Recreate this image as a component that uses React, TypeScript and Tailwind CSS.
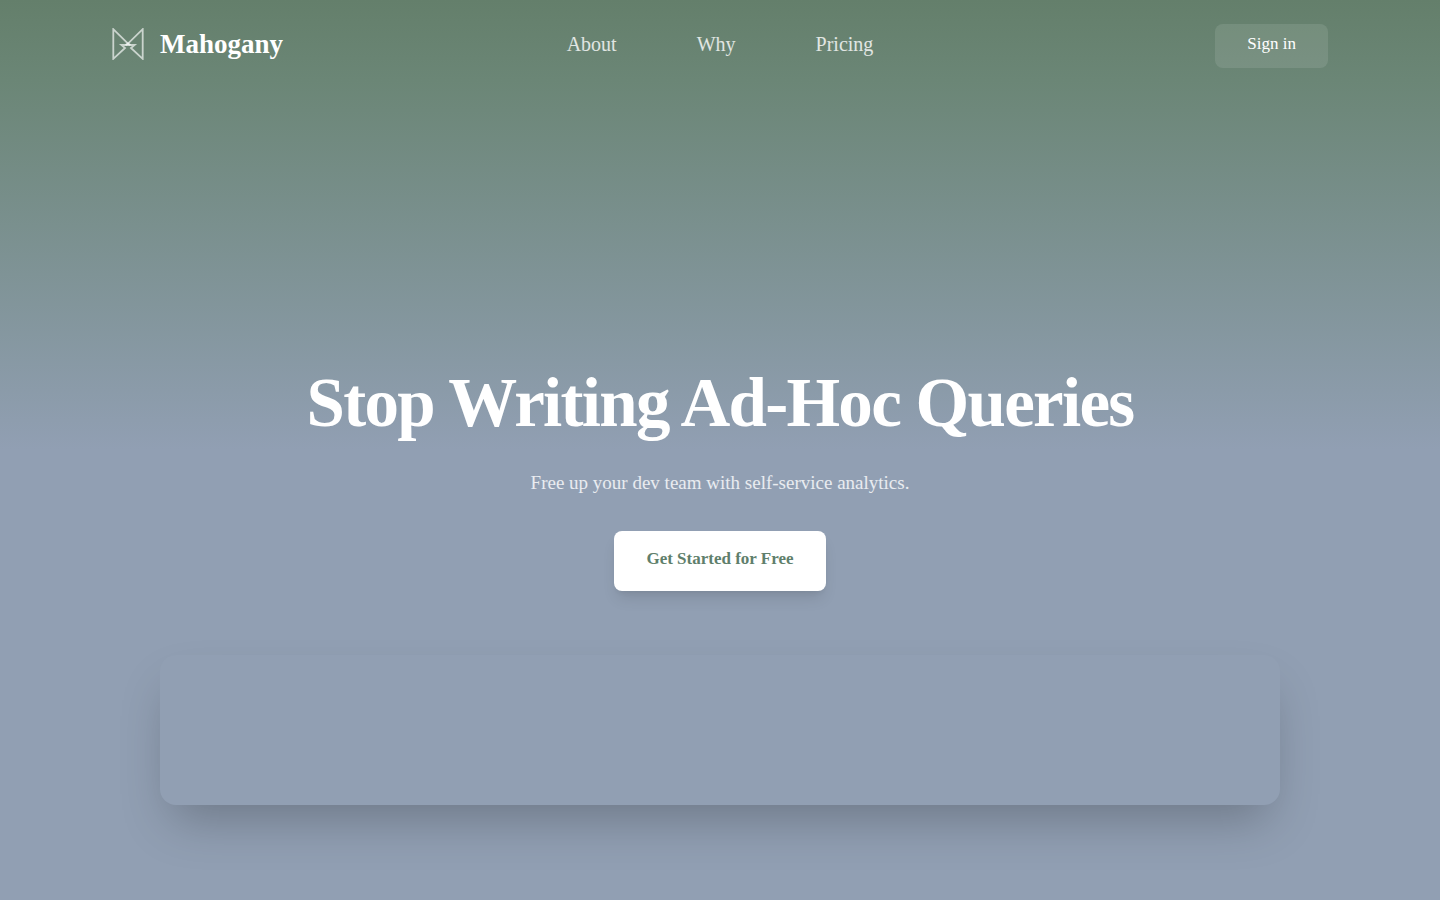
import React from "react";

const links = [
  { label: "About", href: "#about" },
  { label: "Why", href: "#why" },
  { label: "Pricing", href: "#pricing" },
];

const Logo = () => (
  <svg
    className="h-8 w-8 text-white/65"
    viewBox="0 0 32 32"
    fill="none"
    stroke="currentColor"
    strokeWidth="1.8"
    aria-hidden="true"
  >
    <path d="M16 15.6 L1.3 1.2 V30.8 L13 20 L9.4 17 H22.6 L19 20 L30.7 30.8 V1.2 Z" />
    <path d="M13.6 17 L16 15.4 L18.4 17" />
  </svg>
);

const Navbar = () => {
  return (
    <header className="w-full max-w-7xl mx-auto px-8 py-6 grid grid-cols-3 items-start">
      <a href="#" className="flex items-center gap-4 justify-self-start">
        <Logo />
        <span className="text-[27px] leading-10 font-bold text-white">Mahogany</span>
      </a>
      <nav className="flex gap-20 justify-self-center">
        {links.map((link) => (
          <a key={link.label} href={link.href} className="text-xl leading-10 text-white/80">
            {link.label}
          </a>
        ))}
      </nav>
      <button className="justify-self-end h-11 px-8 pb-1 rounded-lg bg-white/10 text-[17px] text-white">
        Sign in
      </button>
    </header>
  );
};

const Hero = () => {
  return (
    <main className="flex flex-col items-center px-8 pt-[271px] pb-[95px] text-center">
      <h1 className="text-[69px] leading-[80px] font-bold tracking-tight text-white">Stop Writing Ad-Hoc Queries</h1>
      <p className="mt-6 text-[19px] leading-8 text-white/80">
        Free up your dev team with self-service analytics.
      </p>
      <button className="mt-8 h-[60px] px-8 pb-1 rounded-lg bg-white text-[17px] font-bold text-[#5f7f6c] shadow-lg">
        Get Started for Free
      </button>
      <div className="mt-16 h-[150px] w-full max-w-[1120px] rounded-2xl shadow-2xl bg-[#919fb3]" />
    </main>
  );
};

const App = () => {
  return (
    <div className="min-h-screen bg-[#919fb3] bg-[linear-gradient(to_bottom,#647f6b,#6b8676_80px,#919fb3_450px)] font-['Liberation_Serif',serif]">
      <Navbar />
      <Hero />
    </div>
  );
};

export default App;
